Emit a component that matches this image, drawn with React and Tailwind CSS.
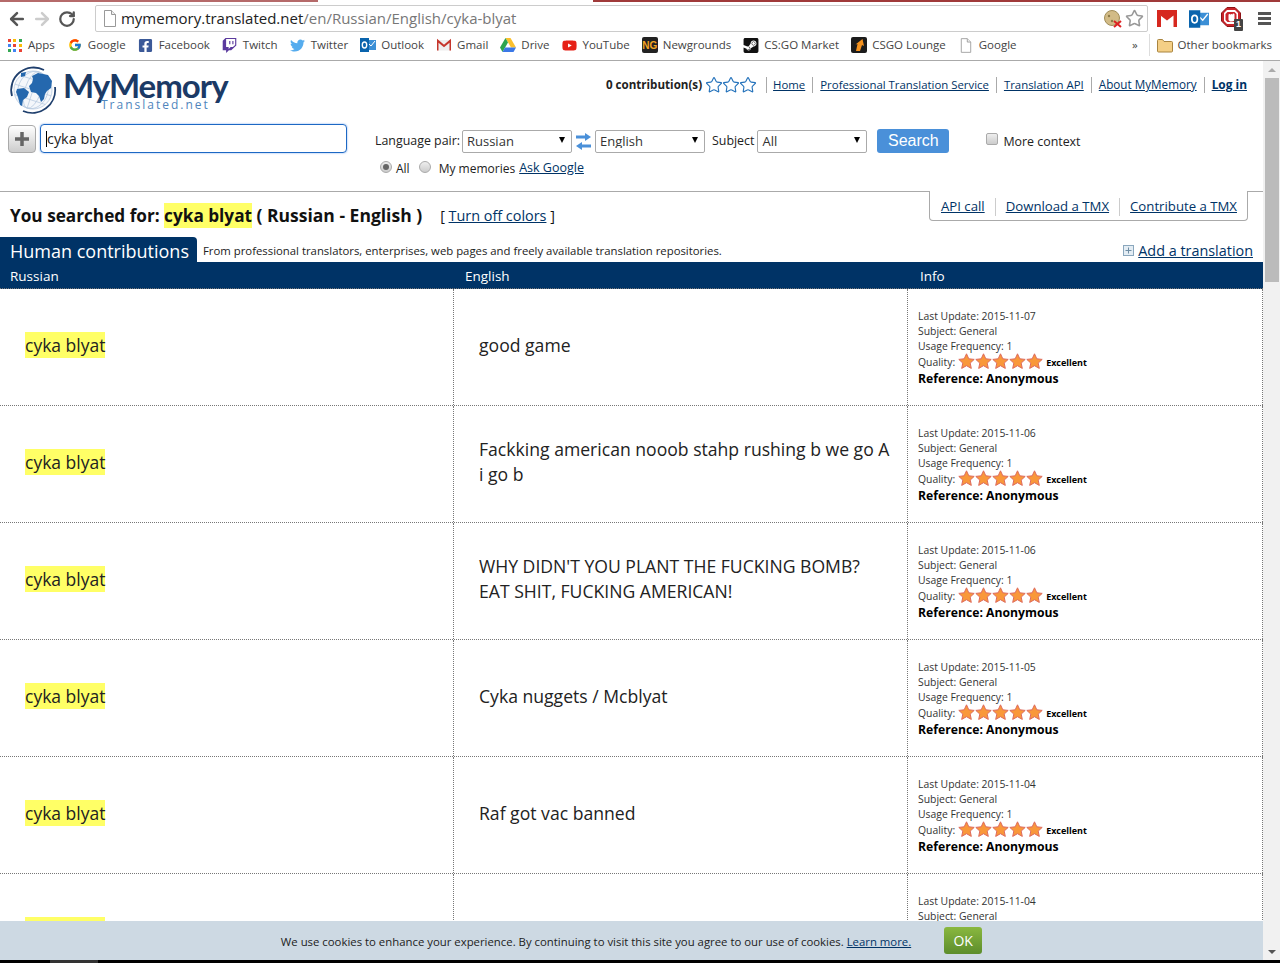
import React from "react";
import { ArrowLeft, ArrowRight, RotateCw, Star } from "lucide-react";
import { FcGoogle } from "react-icons/fc";
import { FaFacebookSquare, FaTwitch, FaTwitter, FaYoutube, FaSteamSquare } from "react-icons/fa";

const rows = [
  { text: "good game", date: "2015-11-07" },
  { text: "Fackking american nooob stahp rushing b we go A i go b", date: "2015-11-06" },
  { text: "WHY DIDN'T YOU PLANT THE FUCKING BOMB? EAT SHIT, FUCKING AMERICAN!", date: "2015-11-06" },
  { text: "Cyka nuggets / Mcblyat", date: "2015-11-05" },
  { text: "Raf got vac banned", date: "2015-11-04" },
  { text: "", date: "2015-11-04" },
];

function PageIcon({ size = 14 }) {
  return (
    <svg width={size} height={size + 3} viewBox="0 0 14 17">
      <path d="M1.5 .5h7l4 4v12h-11z" fill="#fff" stroke="#999" />
      <path d="M8.5 .5v4h4" fill="#eee" stroke="#999" />
    </svg>
  );
}

function AppsIcon() {
  const colors = ["#ea4335", "#fbbc05", "#34a853", "#4285f4", "#ea4335", "#fbbc05", "#34a853", "#4285f4", "#ea4335"];
  return (
    <div className="grid w-[14px] grid-cols-3 gap-[2px]">
      {colors.map((c, i) => (
        <div key={i} className="h-[3px] w-[3px]" style={{ background: c }} />
      ))}
    </div>
  );
}

function OutlookIcon({ size = 16 }) {
  return (
    <svg width={size} height={size} viewBox="0 0 16 16">
      <rect x="6" y="3" width="10" height="10" fill="#3b8fd6" />
      <path d="M7 5l4 4 4-5" fill="none" stroke="#fff" />
      <rect x="0" y="1" width="9" height="14" fill="#0a64ad" />
      <ellipse cx="4.5" cy="8" rx="2.2" ry="3" fill="none" stroke="#fff" strokeWidth="1.4" />
    </svg>
  );
}

function GmailIcon({ size = 14 }) {
  return (
    <svg width={size} height={size} viewBox="0 0 14 14">
      <rect x="0" y="2" width="14" height="10.5" fill="#eee" />
      <path d="M.5 12.5V2.5L7 8l6.5-5.5v10" fill="none" stroke="#c5352b" strokeWidth="2" />
    </svg>
  );
}

function GmailButton() {
  return (
    <svg width="20" height="17" viewBox="0 0 20 17">
      <rect width="20" height="17" fill="#d6281f" />
      <path d="M3.500 5.500L10 10.500l6.500-5V17h-13z" fill="#fff" />
      <path d="M3.500 17V5.500" stroke="#d6281f" />
    </svg>
  );
}

function DriveIcon() {
  return (
    <svg width="16" height="15" viewBox="0 0 16 15">
      <path d="M5.500 0h5l5.500 9.500h-5z" fill="#fbc02d" />
      <path d="M5.500 0L0 9.500 2.500 14 8 4.500z" fill="#2da44e" />
      <path d="M2.500 14h11l2.500-4.500H5z" fill="#3b78e7" />
    </svg>
  );
}

function NgIcon() {
  return (
    <div className="flex h-[16px] w-[16px] items-center justify-center rounded-[2px] bg-[#222] font-['Liberation_Sans',sans-serif] text-[10px] font-bold text-[#f5a623]">
      NG
    </div>
  );
}

function LoungeIcon() {
  return (
    <svg width="16" height="16" viewBox="0 0 16 16">
      <rect width="16" height="16" rx="2" fill="#1c1c1c" />
      <path d="M11.500 2L13 9l-2-1-2 6H5l1.500-7-2 .5z" fill="#f5921e" />
    </svg>
  );
}

function FolderIcon() {
  return (
    <svg width="16" height="15" viewBox="0 0 16 15">
      <path d="M.5 2.500a1 1 0 011-1h4l1.500 2h7.500a1 1 0 011 1v8.500a1 1 0 01-1 1h-13a1 1 0 01-1-1z" fill="#f4cf86" stroke="#a9843f" />
    </svg>
  );
}

function CookieIcon() {
  return (
    <svg width="18" height="18" viewBox="0 0 18 18">
      <circle cx="8" cy="8" r="7.500" fill="#d2bb86" stroke="#a08c58" />
      <circle cx="5" cy="6" r="1.200" fill="#8e7a48" />
      <circle cx="8" cy="11" r="1.200" fill="#8e7a48" />
      <path d="M10 11l7 6M17 11l-7 6" stroke="#d22" strokeWidth="2" />
    </svg>
  );
}

function StopIcon() {
  return (
    <div className="relative h-[24px] w-[22px]">
      <svg width="20" height="20" viewBox="0 0 20 20">
        <path d="M6 .5h8l5.500 5.500v8L14 19.500H6L.5 14V6z" fill="#c9242a" stroke="#8d1216" />
        <path d="M6 3h8l3 3v8l-3 3H6l-3-3V6z" fill="#fff" />
        <path d="M6.500 5h7l2 2v6l-2 2h-7l-2-2V7z" fill="#c9242a" />
        <path d="M7.500 13V8a1 1 0 012 0 1 1 0 012 0v-.5a1 1 0 012 0V12a2.500 2.500 0 01-2.500 2.500H9z" fill="#fff" />
      </svg>
      <div className="absolute bottom-0 right-0 flex h-[12px] w-[9px] items-center justify-center rounded-[1px] bg-[#444] font-['Liberation_Sans',sans-serif] text-[9px] font-bold leading-none text-white">
        1
      </div>
    </div>
  );
}

function GlobeLogo() {
  return (
    <svg width="50" height="50" viewBox="0 0 50 50">
      <circle cx="25" cy="25" r="19" fill="#f4f7fb" stroke="#c3d3e6" />
      <g fill="none" stroke="#b5c8de" strokeWidth="0.7" transform="rotate(18 25 25)">
        <ellipse cx="25" cy="25" rx="8" ry="19" />
        <ellipse cx="25" cy="25" rx="15" ry="19" />
        <path d="M25 6v38M9 15h32M6 25h38M9 35h32" />
      </g>
      <path d="M24 11l6-3 5 1 5 1 4 6-1 7-4 3-2 3-1 5-3 3-2-6-3-3-5-1-2-6 3-3 1-4z" fill="#2568ae" />
      <path d="M9 24l7-1 5 4-2 5-4 3-1 6-2-1-2-8-2-5z" fill="#2568ae" />
      <path d="M13 8l5-1-1 4-4 1z" fill="#2568ae" />
      <path d="M4 31A22.500 22.500 0 0 1 36 5" fill="none" stroke="#1f3f6d" strokeWidth="1.800" />
      <path d="M47 22A23 23 0 0 1 15 46" fill="none" stroke="#1f3f6d" strokeWidth="1.800" />
    </svg>
  );
}

function OrangeStar() {
  return (
    <svg className="-mt-[2px]" width="17" height="16" viewBox="0 0 17 16">
      <path d="M8.500 .8l2.300 5 5.400.6-4 3.700 1.100 5.300-4.800-2.700-4.800 2.700 1.100-5.300-4-3.700 5.400-.6z" fill="#f9983a" stroke="#dd6a5e" />
    </svg>
  );
}

function Bookmark({ icon, label }) {
  return (
    <div className="flex items-center gap-[5px]">
      <div className="flex w-[16px] justify-center">{icon}</div>
      <span>{label}</span>
    </div>
  );
}

function Select({ value }) {
  return (
    <div className="relative w-[110px]">
      <select
        defaultValue={value}
        className="h-[23px] w-full appearance-none rounded-[2px] border border-[#aaa] bg-white pl-[4px] text-[13px] leading-none text-[#333]"
      >
        <option>{value}</option>
      </select>
      <div className="absolute right-[7px] top-[7px] h-0 w-0 border-x-[3.5px] border-t-[6px] border-x-transparent border-t-black" />
    </div>
  );
}

function Radio({ checked }) {
  return (
    <div className="flex h-[12px] w-[12px] items-center justify-center rounded-full border border-[#aaa] bg-linear-to-b from-[#eee] to-[#ccc]">
      {checked && <div className="h-[6px] w-[6px] rounded-full bg-[#666]" />}
    </div>
  );
}

function NavLink({ children, bold }) {
  return <a className={`text-[#003366] underline ${bold ? "font-bold" : ""}`}>{children}</a>;
}

function Row({ row }) {
  return (
    <div className="grid h-[117px] grid-cols-[454px_454px_355px] border-b border-dotted border-[#777]">
      <div className="flex items-center border-r border-dotted border-[#777] pb-[4px] pl-[25px] text-[17.5px]">
        <span className="bg-[#ffff66]">cyka blyat</span>
      </div>
      <div className="flex items-center border-r border-dotted border-[#777] pb-[4px] pl-[25px] pr-[15px] text-[17.6px] leading-[25px]">
        <span>{row.text}</span>
      </div>
      <div className="flex flex-col justify-center border-r border-dotted border-[#777] pl-[10px] pt-[2px] text-[10.4px] leading-[15px] text-[#333]">
        <div>Last Update: {row.date}</div>
        <div>Subject: General</div>
        <div>Usage Frequency: 1</div>
        <div className="flex h-[16px] items-center">
          <span className="mr-[3px]">Quality:</span>
          {[0, 1, 2, 3, 4].map((i) => (
            <OrangeStar key={i} />
          ))}
          <span className="ml-[3px] text-[9px] font-bold text-black">Excellent</span>
        </div>
        <div className="text-[12.2px] font-bold leading-[17px] text-black">Reference: Anonymous</div>
      </div>
    </div>
  );
}

export default function App() {
  return (
    <div className="relative flex h-[963px] w-[1280px] flex-col overflow-hidden bg-black font-['Open_Sans',sans-serif] text-[#222]">
      {/* browser chrome */}
      <div className="flex h-[3px] bg-white">
        <div className="h-[2px] w-[318px] bg-[#b56a6a]" />
        <div className="h-[2px] w-[275px]" />
        <div className="h-[2px] flex-1 bg-[#a03a3a]" />
      </div>
      <div className="flex h-[29px] items-center bg-white pr-[9px] pt-[2px]">
        <div className="flex w-[95px] items-center gap-[5px] pl-[7px]">
          <ArrowLeft size={20} strokeWidth={3} className="text-[#555]" />
          <ArrowRight size={20} strokeWidth={3} className="text-[#ccc]" />
          <RotateCw size={18} strokeWidth={3} className="ml-[1px] text-[#555]" />
        </div>
        <div className="flex h-[27px] w-[1054px] items-center rounded-[2px] border border-[#ccc] pl-[7px] pr-[3px]">
          <PageIcon />
          <div className="ml-[4px] flex-1 text-[15px]">
            mymemory.translated.net<span className="text-[#777]">/en/Russian/English/cyka-blyat</span>
          </div>
          <CookieIcon />
          <Star size={19} className="ml-[3px] text-[#999]" />
        </div>
        <div className="ml-[9px] flex items-center gap-[12px]">
          <GmailButton />
          <OutlookIcon size={20} />
          <StopIcon />
        </div>
        <div className="ml-[15px] flex flex-col gap-[2px]">
          <div className="h-[3px] w-[13px] bg-[#555]" />
          <div className="h-[3px] w-[13px] bg-[#555]" />
          <div className="h-[3px] w-[13px] bg-[#555]" />
        </div>
      </div>
      <div className="flex h-[29px] items-center justify-between border-b border-[#aaa] bg-white pb-[2px] pl-[7px] pr-[8px] text-[11.5px] text-[#444]">
        <div className="flex items-center gap-[12px]">
          <Bookmark icon={<AppsIcon />} label="Apps" />
          <Bookmark icon={<FcGoogle size={14} />} label="Google" />
          <Bookmark icon={<FaFacebookSquare size={15} className="text-[#3b5998]" />} label="Facebook" />
          <Bookmark icon={<FaTwitch size={15} className="text-[#5b3a9e]" />} label="Twitch" />
          <Bookmark icon={<FaTwitter size={15} className="text-[#55acee]" />} label="Twitter" />
          <Bookmark icon={<OutlookIcon />} label="Outlook" />
          <Bookmark icon={<GmailIcon />} label="Gmail" />
          <Bookmark icon={<DriveIcon />} label="Drive" />
          <Bookmark icon={<FaYoutube size={15} className="text-[#e62117]" />} label="YouTube" />
          <Bookmark icon={<NgIcon />} label="Newgrounds" />
          <Bookmark icon={<FaSteamSquare size={17} className="text-[#111]" />} label="CS:GO Market" />
          <Bookmark icon={<LoungeIcon />} label="CSGO Lounge" />
          <Bookmark icon={<PageIcon size={12} />} label="Google" />
        </div>
        <div className="flex items-center">
          <span className="mr-[11px]">»</span>
          <div className="mr-[7px] h-[22px] w-px bg-[#ddd]" />
          <Bookmark icon={<FolderIcon />} label="Other bookmarks" />
        </div>
      </div>

      {/* page */}
      <div className="flex h-[899px] bg-white">
        <div className="w-[1263px] overflow-hidden">
          <div className="flex h-[63px] items-start justify-between pl-[8px] pr-[16px] pt-[4px]">
            <div className="flex items-start">
              <GlobeLogo />
              <div className="ml-[5px] flex flex-col pt-[6px]">
                <span className="font-['Lato',sans-serif] text-[33px] font-bold leading-[28px] tracking-[-1px] text-[#1b3a66]">MyMemory</span>
                <span className="ml-[38px] text-[12px] leading-[12px] tracking-[2px] text-[#4f85bc]">Translated.net</span>
              </div>
            </div>
            <div className="flex h-[40px] items-center text-[11.4px]">
              <span className="text-[11.6px] font-bold">0 contribution(s)</span>
              <div className="ml-[3px] flex -space-x-px">
                <Star size={18} strokeWidth={1.5} className="text-[#2472bb]" />
                <Star size={18} strokeWidth={1.5} className="text-[#2472bb]" />
                <Star size={18} strokeWidth={1.5} className="text-[#2472bb]" />
              </div>
              <div className="ml-[9px] flex items-center">
                <div className="mr-[6px] h-[16px] w-px bg-[#aaa]" />
                <NavLink>Home</NavLink>
                <div className="mx-[7px] h-[16px] w-px bg-[#aaa]" />
                <NavLink>Professional Translation Service</NavLink>
                <div className="mx-[7px] h-[16px] w-px bg-[#aaa]" />
                <NavLink>Translation API</NavLink>
                <div className="mx-[7px] h-[16px] w-px bg-[#aaa]" />
                <span className="text-[11.7px]">
                  <NavLink>About MyMemory</NavLink>
                </span>
                <div className="mx-[7px] h-[16px] w-px bg-[#aaa]" />
                <span className="text-[11.9px]">
                  <NavLink bold>Log in</NavLink>
                </span>
              </div>
            </div>
          </div>

          <div className="flex h-[29px] items-start pl-[8px] text-[12.4px]">
            <button className="mt-px flex h-[28px] w-[28px] items-center justify-center rounded-[4px] border border-[#aaa] bg-linear-to-b from-white to-[#ccc]">
              <svg width="18" height="18" viewBox="0 0 18 18">
                <path d="M9 2v14M2 9h14" stroke="#666" strokeWidth="3.500" />
              </svg>
            </button>
            <div className="relative ml-[4px]">
              <input
                readOnly
                value="cyka blyat"
                className="h-[29px] w-[307px] rounded-[4px] border border-[#1d68c4] pl-[6px] text-[14.4px] text-[#222] shadow-[0_0_2px_#6ea4ee] outline-none"
              />
              <div className="absolute left-[6px] top-[7px] h-[16px] w-px bg-black" />
            </div>
            <div className="ml-[28px] flex items-center pt-[5px]">
              <span className="mr-[2px] mt-[1px]">Language pair:</span>
              <Select value="Russian" />
              <svg className="mx-[4px]" width="15" height="17" viewBox="0 0 15 17">
                <path d="M0 2.500h9V0l6 4-6 4V5.500H0zM15 11.500H6V9l-6 4 6 4v-2.500h9z" fill="#4a90d9" />
              </svg>
              <Select value="English" />
              <span className="ml-[7px] mr-[3px] mt-[1px]">Subject</span>
              <Select value="All" />
              <button className="ml-[10px] h-[24px] w-[72px] rounded-[3px] bg-[#4a90d9] font-['Liberation_Sans',sans-serif] text-[16px] leading-none text-white">
                Search
              </button>
              <div className="-mt-[4px] ml-[37px] h-[12px] w-[12px] rounded-[2px] border border-[#aaa] bg-linear-to-b from-[#eee] to-[#ccc]" />
              <span className="ml-[5px] mt-[3px]">More context</span>
            </div>
          </div>

          <div className="flex h-[20px] items-center pl-[380px] pt-[8px] text-[12px]">
            <Radio checked />
            <span className="ml-[4px] mt-[3px]">All</span>
            <div className="ml-[9px]">
              <Radio />
            </div>
            <span className="ml-[8px] mt-[3px]">My memories</span>
            <span className="ml-[4px] mt-[3px] text-[12.5px]">
              <NavLink>Ask Google</NavLink>
            </span>
          </div>

          <div className="mt-[18px] flex h-[46px] items-start justify-between border-t border-[#aaa] pl-[10px] pr-[15px]">
            <div className="flex items-center pt-[11px] text-[17.2px] font-bold leading-[25px] text-[#111]">
              <span>You searched for:&nbsp;</span>
              <span className="bg-[#ffff66]">cyka blyat</span>
              <span className="text-[17.5px]">&nbsp;( Russian - English )</span>
              <span className="ml-[18px] text-[14.4px] font-normal">
                [ <NavLink>Turn off colors</NavLink> ]
              </span>
            </div>
            <div className="-mt-px flex h-[30px] items-center rounded-b-[4px] border-x border-b border-[#aaa] bg-white pl-[11px] pr-[10px] pt-[3px] text-[13.2px]">
              <NavLink>API call</NavLink>
              <div className="mx-[10px] h-[18px] w-px bg-[#ccc]" />
              <NavLink>Download a TMX</NavLink>
              <div className="mx-[10px] h-[18px] w-px bg-[#ccc]" />
              <NavLink>Contribute a TMX</NavLink>
            </div>
          </div>

          <div className="flex h-[25px] items-center pr-[10px]">
            <div className="flex h-[25px] w-[197px] items-center rounded-tr-[4px] bg-[#003366] pl-[10px] pt-[3px] text-[18px] text-white">
              Human contributions
            </div>
            <span className="ml-[6px] flex-1 pt-[3px] text-[11.35px]">
              From professional translators, enterprises, web pages and freely available translation repositories.
            </span>
            <svg className="mr-[4px] mt-[1px]" width="11" height="11" viewBox="0 0 11 11">
              <rect x=".5" y=".5" width="10" height="10" fill="#e4edf4" stroke="#8aa7bd" />
              <path d="M5.500 2.500v6M2.500 5.500h6" stroke="#6e8ca3" />
            </svg>
            <a className="pt-[2px] text-[14.4px] text-[#003366] underline">Add a translation</a>
          </div>

          <div className="grid h-[27px] grid-cols-[455px_455px_353px] items-center border-b border-dotted border-[#777] bg-[#003366] pt-[2px] text-[13.5px] text-white">
            <span className="pl-[10px]">Russian</span>
            <span className="pl-[10px]">English</span>
            <span className="pl-[10px]">Info</span>
          </div>

          {rows.map((row, i) => (
            <Row key={i} row={row} />
          ))}
        </div>

        {/* scrollbar */}
        <div className="flex w-[17px] flex-col items-center bg-[#f1f1f1]">
          <div className="flex h-[17px] items-center justify-center">
            <div className="h-0 w-0 border-x-[4px] border-b-[4px] border-x-transparent border-b-[#aaa]" />
          </div>
          <div className="h-[204px] w-[14px] bg-[#bbb]" />
          <div className="flex-1" />
          <div className="flex h-[17px] items-center justify-center">
            <div className="h-0 w-0 border-x-[4px] border-t-[4px] border-x-transparent border-t-[#555]" />
          </div>
        </div>
      </div>

      {/* bottom edge of the window */}
      <div className="flex h-[3px]">
        <div className="ml-[50px] h-[3px] w-[48px] bg-[#333]" />
      </div>

      {/* cookie notice */}
      <div className="absolute bottom-[3px] left-0 flex h-[39px] w-[1263px] items-center justify-center bg-[#cdd9e3] text-[11.37px]">
        <span className="mt-[3px]">
          We use cookies to enhance your experience. By continuing to visit this site you agree to our use of cookies.{" "}
          <NavLink>Learn more.</NavLink>
        </span>
        <button className="ml-[33px] h-[27px] w-[38px] rounded-[3px] bg-linear-to-b from-[#8ab83f] to-[#5c8d2c] text-[14px] text-white">
          OK
        </button>
      </div>
    </div>
  );
}
